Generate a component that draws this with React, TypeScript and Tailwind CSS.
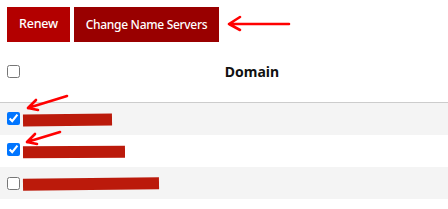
import React from 'react';

const ROWS = [
  { id: 'r1', checked: true, bar: 'w-[89px]', bg: 'bg-[#f4f4f4]', tilt: 'rotate-[-0.6deg]', box: '-translate-y-[1px]' },
  { id: 'r2', checked: true, bar: 'w-[102px]', bg: 'bg-white', tilt: 'rotate-[-0.4deg]', box: '-translate-y-[2px]' },
  { id: 'r3', checked: false, bar: 'w-[136px]', bg: 'bg-[#f4f4f4]', tilt: 'rotate-[-0.7deg]', box: '' },
];

function Arrows() {
  // annotation arrows drawn over the screenshot
  return (
    <svg className="pointer-events-none absolute inset-0" width="448" height="209" viewBox="0 0 448 209">
      <g stroke="#ff0000" strokeWidth="2.6" strokeLinecap="round" fill="none">
        <path d="M289 24 L229 24 M229 24 L240 17 M229 24 L240 30" />
        <path d="M67 96 L28 108 M28 108 L36 100 M28 108 L38 110" />
        <path d="M60 132 L27 142 M27 142 L35 134 M27 142 L37 144" />
      </g>
    </svg>
  );
}

export default function App() {
  return (
    <div className="relative h-[209px] w-[448px] overflow-hidden bg-white font-['Noto_Sans',sans-serif]">
      <div className="flex gap-1 px-[7px] pt-[7px]">
        <button className="h-[35px] w-[63px] bg-[#b30000] text-[12.5px] font-medium tracking-[-0.2px] text-white">
          Renew
        </button>
        <button className="h-[35px] w-[145px] bg-[#990000] text-[12px] font-medium tracking-[-0.3px] text-white">
          Change Name Servers
        </button>
      </div>

      <div className="mt-[8px]">
        <div className="flex h-[53px] items-center border-b border-[#cccccc] pb-[9px]">
          <div className="w-[56px] pl-[7px]">
            <input type="checkbox" className="m-0 block h-[13px] w-[13px]" />
          </div>
          <div className="flex-1 text-center text-[14px] font-bold text-[#111]">Domain</div>
        </div>

        {ROWS.map((r) => (
          <div key={r.id} className={`flex h-[32px] items-center ${r.bg}`}>
            <input
              type="checkbox"
              defaultChecked={r.checked}
              className={`m-0 ml-[7px] block h-[13px] w-[13px] accent-[#0075ff] ${r.box}`}
            />
            <span className={`ml-[3px] mt-[2px] block h-[12px] bg-[#bb1a0b] ${r.bar} ${r.tilt}`} />
          </div>
        ))}
      </div>

      <Arrows />
    </div>
  );
}
